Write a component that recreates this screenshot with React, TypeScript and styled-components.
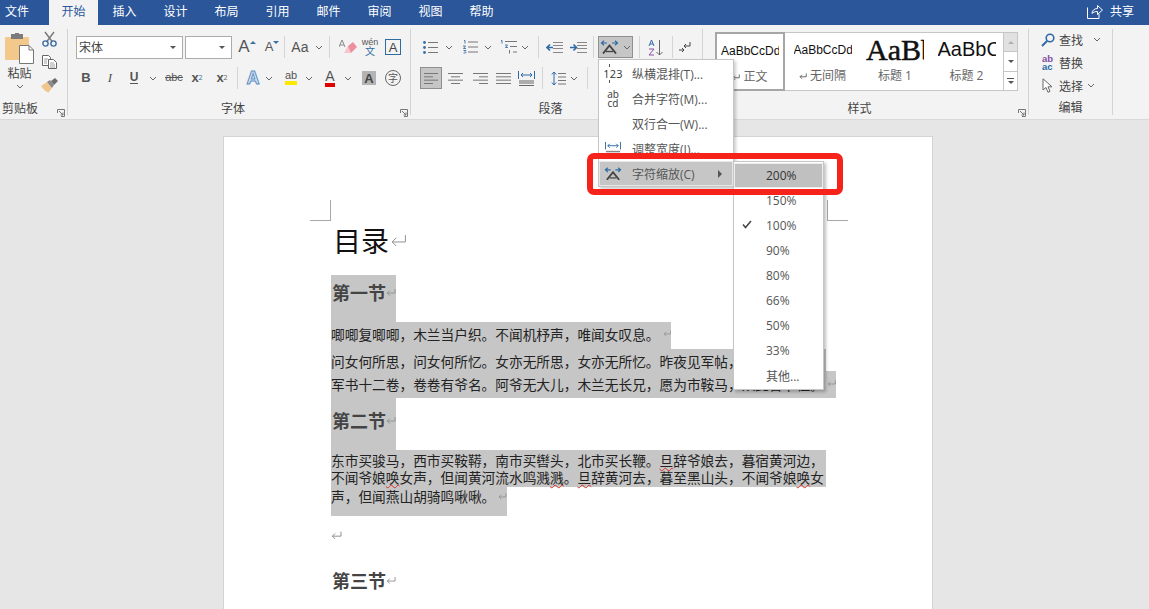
import React from "react";
import styled, { createGlobalStyle } from "styled-components";

const UI = `"Open Sans", "Noto Sans CJK SC", sans-serif`;
const CJK = `"Noto Sans CJK SC", sans-serif`;

const Global = createGlobalStyle`
  html, body { margin: 0; padding: 0; background: #e6e6e6; }
  #root { width: 1149px; height: 609px; overflow: hidden; }
  * { box-sizing: border-box; }
`;

const Shell = styled.div`
  position: relative; width: 1149px; height: 609px; overflow: hidden;
  font-family: ${UI}; font-size: 12px; color: #444;
  display: flex; flex-direction: column;
`;
const TabBar = styled.div`
  height: 25px; flex: none; background: #2b579a; display: flex; color: #fff;
  justify-content: space-between;
`;
const TabList = styled.div`display: flex;`;
const Tab = styled.div<{ $active?: boolean; $file?: boolean }>`
  width: ${p => (p.$file ? 34 : p.$active ? 49 : 51)}px;
  margin: ${p => (p.$file ? "0 15px 0 0" : p.$active ? "0 1px 0 0" : "0")};
  height: 25px; display: flex; align-items: center; justify-content: center;
  background: ${p => (p.$active ? "#f3f3f3" : "transparent")};
  color: ${p => (p.$active ? "#2b579a" : "#fff")};
  padding-bottom: 3px;
`;
const Share = styled.div`
  display: flex; align-items: center; gap: 7px; padding: 0 15px 3px 0; color: #fff;
`;

const Ribbon = styled.div`
  height: 95px; flex: none; background: #f3f3f3; border-bottom: 1px solid #d9d9d9;
  display: flex; padding-top: 4px;
`;
const Group = styled.div<{ $w: number }>`
  width: ${p => p.$w}px; height: 86px; border-right: 1px solid #d3d3d3; flex: none;
  display: flex; flex-direction: column;
`;
const Row = styled.div<{ $mt: number }>`
  height: 22px; margin-top: ${p => p.$mt}px; display: flex; align-items: center; flex: none;
`;
const Tool = styled.div<{ $w: number; $ml?: number; $on?: boolean }>`
  width: ${p => p.$w}px; height: 22px; margin-left: ${p => p.$ml ?? 0}px; flex: none;
  display: flex; align-items: center; justify-content: center; color: #555;
  background: ${p => (p.$on ? "#c6c6c6" : "transparent")};
  border: ${p => (p.$on ? "1px solid #8f8f8f" : "none")};
`;
const VSep = styled.div<{ $ml: number }>`
  width: 1px; height: 22px; background: #d5d5d5; margin-left: ${p => p.$ml}px; flex: none;
`;
const Glyph = styled.span<{ $s: number; $b?: boolean; $c?: string; $i?: boolean; $serif?: boolean }>`
  font-family: ${p => (p.$serif ? `"Liberation Serif", serif` : `"Liberation Sans", sans-serif`)};
  font-size: ${p => p.$s}px; font-weight: ${p => (p.$b ? 700 : 400)};
  font-style: ${p => (p.$i ? "italic" : "normal")};
  color: ${p => p.$c ?? "#555"}; line-height: 1; margin-top: -1px;
`;
const Under = styled.span<{ $color: string; $h: number }>`
  display: inline-flex; flex-direction: column; align-items: center;
  border-bottom: ${p => p.$h}px solid ${p => p.$color}; line-height: 1;
`;
const Sub = styled.sub`font-size: 7px; line-height: 0; color: #3a6ea5;`;
const Sup = styled.sup`font-size: 7px; line-height: 0; color: #666;`;
const Caret = styled.i<{ $down?: boolean }>`
  width: 0; height: 0; align-self: flex-start; margin-top: 5px;
  border-left: 3px solid transparent; border-right: 3px solid transparent;
  border-${p => (p.$down ? "top" : "bottom")}: 3px solid #3a6ea5;
`;
const Combo = styled.div<{ $w: number; $ml: number }>`
  width: ${p => p.$w}px; height: 23px; margin-left: ${p => p.$ml}px; background: #fff;
  border: 1px solid #ababab; display: flex; align-items: center; justify-content: space-between;
  padding: 0 6px 0 2px; color: #444; font-size: 12px; flex: none;
`;
const DownTri = styled.i`
  width: 0; height: 0; border-left: 3px solid transparent; border-right: 3px solid transparent;
  border-top: 3px solid #555;
`;
const LabelRow = styled.div<{ $mt: number }>`
  margin-top: ${p => p.$mt}px; height: 16px; display: flex; align-items: center; flex: none;
`;
const GroupLabel = styled.div<{ $pr?: number }>`
  flex: 1; text-align: center; padding-right: ${p => p.$pr ?? 0}px; color: #444; line-height: 16px;
`;
const Launcher = styled.div`
  width: 12px; height: 16px; display: flex; align-items: flex-end; justify-content: center;
`;
const ClipBody = styled.div`height: 72px; display: flex; flex: none;`;
const PasteCol = styled.div`
  width: 38px; padding: 4px 0 0 1px; display: flex; flex-direction: column; align-items: center; color: #444;
`;
const PasteText = styled.div`line-height: 16px; margin-top: 2px;`;
const ChevBox = styled.div`margin-top: 2px; line-height: 0;`;
const ClipTools = styled.div`
  width: 22px; margin-top: -2px; display: flex; flex-direction: column; align-items: center;
`;
const ClipTool = styled.div`height: 23.5px; flex: none; display: flex; align-items: center; justify-content: center;`;

const Gallery = styled.div`
  width: 303px; height: 59px; margin: 3px 0 0 12px; background: #fff;
  border: 1px solid #c6c6c6; border-left: none; display: flex; flex: none;
`;
const StyleItem = styled.div<{ $w: number; $sel?: boolean }>`
  width: ${p => p.$w}px; height: ${p => (p.$sel ? "59px" : "57px")}; flex: none;
  margin-top: ${p => (p.$sel ? "-1px" : "0")};
  border: ${p => (p.$sel ? "2px solid #a6a6a6" : "none")};
  display: flex; flex-direction: column; align-items: center; overflow: hidden;
  background: #fff;
`;
const Sample = styled.div<{ $size: number; $serif?: boolean; $heavy?: boolean; $w: number }>`
  width: ${p => p.$w}px; height: 33px; overflow: hidden; white-space: nowrap;
  display: flex; align-items: center; flex: none; color: #111;
  font-family: ${p => (p.$serif ? `"Liberation Serif", serif` : `"Liberation Sans", sans-serif`)};
  font-size: ${p => p.$size}px; -webkit-text-stroke: ${p => (p.$heavy ? ".5px #111" : "0")};
`;
const Caption = styled.div`
  display: flex; align-items: center; gap: 3px; color: #666; line-height: 16px; height: 20px;
`;
const ScrollCol = styled.div`
  width: 15px; height: 59px; margin-top: -1px; display: flex; flex-direction: column; flex: none;
  border: 1px solid #c6c6c6; background: #fff;
`;
const ScrollBtn = styled.div<{ $top?: boolean }>`
  flex: 1; display: flex; align-items: center; justify-content: center; flex-direction: column; gap: 2px;
  background: ${p => (p.$top ? "#e1e1e1" : "#fff")};
  & + & { border-top: 1px solid #c6c6c6; }
`;
const TinyBar = styled.i`width: 7px; height: 1px; background: #555;`;
const UpTri = styled.i`
  width: 0; height: 0; border-left: 3px solid transparent; border-right: 3px solid transparent;
  border-bottom: 3px solid #b0b0b0;
`;
const EditColumn = styled.div`margin-top: -1px; display: flex; flex-direction: column; flex: none;`;
const EditRow = styled.div`
  height: 23px; display: flex; align-items: center; gap: 4px; padding-left: 11px; color: #444; flex: none;
`;
const EditIcon = styled.div`width: 15px; display: flex; justify-content: center; flex: none;`;

const Canvas = styled.div`flex: 1; padding-top: 16px; overflow: hidden;`;
const Page = styled.div`
  position: relative; width: 710px; height: 520px; margin-left: 223px; background: #fff;
  border: 1px solid #d4d4d4; padding: 85px 0 0 107px; font-family: ${CJK}; color: #222;
`;
const Crop = styled.div<{ $right?: boolean }>`
  position: absolute; top: 63px; width: 21px; height: 21px;
  ${p => (p.$right ? "left: 603px; border-left: 1px solid #a8a8a8;" : "left: 86px; border-right: 1px solid #a8a8a8;")}
  border-bottom: 1px solid #a8a8a8;
`;
const Title = styled.div`
  height: 36px; margin: 0 0 17px 2px; font-size: 28px; font-weight: 400; color: #111;
  display: flex; align-items: center; gap: 1px; line-height: 36px; font-family: ${CJK};
`;
const Sel = styled.div<{ $w: number; $h: number; $pb?: number; $pt?: number; $plain?: boolean }>`
  width: ${p => p.$w}px; height: ${p => p.$h}px;
  padding-bottom: ${p => p.$pb ?? 0}px; padding-top: ${p => p.$pt ?? 0}px;
  background: ${p => (p.$plain ? "transparent" : "#c6c6c6")};
  display: flex; align-items: center; white-space: nowrap; font-size: 13.7px; line-height: 18px;
  color: #222;
`;
const Heading = styled.span`font-size: 18px; font-weight: 700; color: #444; margin-left: 1px;`;
const Squig = styled.span`text-decoration: underline wavy #d8342a 1px; text-underline-offset: 1px;`;

const Menu = styled.div`
  position: absolute; left: 598px; top: 59px; width: 136px; height: 128px; background: #fff;
  border: 1px solid #c6c6c6; padding: 1px 0; box-shadow: 2px 2px 3px rgba(0,0,0,.2); color: #555;
`;
const MenuItem = styled.div<{ $on?: boolean }>`
  height: 25px; display: flex; align-items: center; position: relative;
  background: ${p => (p.$on ? "#c6c6c6" : "transparent")};
  border: ${p => (p.$on ? "1px solid #e8e8e8" : "none")};
  padding-left: ${p => (p.$on ? "0" : "1px")};
`;
const MenuIcon = styled.div`
  width: 32px; height: 23px; padding-right: 6px; display: flex; align-items: center; justify-content: center; flex: none;
`;
const MenuText = styled.div`flex: 1; white-space: nowrap;`;
const MenuCaret = styled.i`
  width: 0; height: 0; margin-right: 10px; border-top: 4px solid transparent;
  border-bottom: 4px solid transparent; border-left: 4px solid #555;
`;
const SubMenu = styled.div`
  position: absolute; left: 733px; top: 161px; width: 91px; height: 229px; background: #fff;
  border: 1px solid #c6c6c6; padding: 1px 0; box-shadow: 2px 2px 3px rgba(0,0,0,.25); color: #555;
`;
const SubItem = styled.div<{ $on?: boolean }>`
  height: 25px; display: flex; align-items: center; padding-left: ${p => (p.$on ? 31 : 32)}px; position: relative;
  background: ${p => (p.$on ? "#c0c0c0" : "transparent")};
  border: ${p => (p.$on ? "1px solid #ededed" : "none")};
  color: ${p => (p.$on ? "#333" : "#555")};
`;
const Check = styled.span`position: absolute; left: 8px; top: 7px; line-height: 0;`;
const RedMark = styled.div`
  position: absolute; left: 587px; top: 153px; width: 256px; height: 42px;
  border: 6px solid #f5231a; border-radius: 7px; pointer-events: none;
`;

/* ---------- icons ---------- */
const Chev = () => (
  <svg width="8" height="5" viewBox="0 0 8 5"><path d="M1 1l3 3 3-3" fill="none" stroke="#666" strokeWidth="1" /></svg>
);
const Return = ({ w = 13, c = "#8c8c8c" }: { w?: number; c?: string }) => (
  <svg width={w} height={w * 0.75} viewBox="0 0 16 12">
    <path d="M14.500 1v6.500H2M6 3.500L2 7.500l4 4" fill="none" stroke={c} strokeWidth={(16 / w) * 0.95} />
  </svg>
);
const LaunchIcon = () => (
  <svg width="8" height="8" viewBox="0 0 8 8">
    <path d="M.5 4V.5H7.500V7.500H4M2 2l4 4M6 3.500V6H3.500" fill="none" stroke="#777" strokeWidth="1" />
  </svg>
);
const PasteIcon = () => (
  <svg width="30" height="31" viewBox="0 0 30 31">
    <rect x="0" y="4" width="24" height="23" rx="1" fill="#f2c98b" />
    <rect x="6" y="1" width="12" height="5" fill="#7c7c7c" />
    <rect x="10" y="0" width="4" height="2" fill="#7c7c7c" />
    <path d="M14.500 12.500H24l4.500 4.500V30.500H14.500z" fill="#fff" stroke="#777" />
    <path d="M24 12.500V17h4.500" fill="none" stroke="#777" />
  </svg>
);
const Scissors = () => (
  <svg width="15" height="16" viewBox="0 0 15 16">
    <path d="M3 1l7.500 10M12 1L4.500 11" stroke="#777" strokeWidth="1.400" fill="none" />
    <circle cx="3.500" cy="12.500" r="2.600" fill="none" stroke="#3a6ea5" strokeWidth="1.400" />
    <circle cx="11.500" cy="12.500" r="2.600" fill="none" stroke="#3a6ea5" strokeWidth="1.400" />
  </svg>
);
const CopyIcon = () => (
  <svg width="15" height="14" viewBox="0 0 15 14">
    <path d="M.5.5h6l2 2v8H.5z" fill="#fff" stroke="#666" />
    <path d="M6.500 4.500h5l3 3v6h-8z" fill="#fff" stroke="#666" />
    <path d="M2 4h4M2 6h3M2 8h3M8 8h4M8 10h5M8 12h5" stroke="#888" strokeWidth=".8" />
  </svg>
);
const BrushIcon = () => (
  <svg width="17" height="15" viewBox="0 0 17 15">
    <path d="M0 8l6-4 5 6-3 4c-2 1-5-2-8-6z" fill="#efc78c" />
    <path d="M6 4l3-2 4 5-2 3z" fill="#8a8a8a" />
    <path d="M10 3l4-3 3 3-4 4z" fill="#6d6d6d" />
  </svg>
);
const Eraser = () => (
  <svg width="18" height="17" viewBox="0 0 18 17">
    <path d="M9 7l5-4 4 5-6 6-3-1z" fill="#ee8fa0" />
    <path d="M5 14l4-7 3 7z" fill="#f5c5cd" />
    <path d="M0 8L3 1l3 7M1.200 6h3.600" fill="none" stroke="#888" strokeWidth="1" />
  </svg>
);
const WenStack = styled.span`
  display: flex; flex-direction: column; align-items: center; line-height: 8px; font-size: 9px; color: #555;
  font-family: "Liberation Sans", sans-serif;
  & b { font: 400 10px/10px ${CJK}; color: #2e6ba6; }
`;
const CircleChar = styled.span`
  width: 16px; height: 16px; border: 1px solid #666; border-radius: 50%;
  display: flex; align-items: center; justify-content: center; font: 400 10px/1 ${CJK}; color: #555;
`;
const ABox = styled.span`
  width: 16px; height: 16px; border: 1px solid #2f6c9f; display: flex; align-items: center; justify-content: center;
  font: 400 13px "Liberation Sans", sans-serif; color: #444;
`;
const AGrey = styled.span`
  width: 14px; height: 14px; background: #b4b4b4; display: flex; align-items: center; justify-content: center;
  font: 700 13px "Liberation Sans", sans-serif; color: #444;
`;
const AGlow = styled.span`
  font: 700 18px "Liberation Sans", sans-serif; color: #dbe9f6; line-height: 1;
  -webkit-text-stroke: 1px #5b8fc4;
`;
const Lines = ({ xs, w = 15 }: { xs: [number, number][]; w?: number }) => (
  <svg width={w} height="13" viewBox={`0 0 ${w} 13`}>
    {xs.map(([a, b], i) => (
      <path key={i} d={`M${a} ${1.5 + i * (10 / (xs.length - 1))}H${b}`} stroke="#777" />
    ))}
  </svg>
);
const Bullets = () => (
  <svg width="15" height="13" viewBox="0 0 15 13">
    {[1.5, 6.5, 11.5].map(y => (
      <g key={y}><circle cx="1.500" cy={y} r="1.400" fill="#3a6ea5" /><path d={`M5 ${y}H15`} stroke="#777" /></g>
    ))}
  </svg>
);
const Numbers = () => (
  <svg width="15" height="14" viewBox="0 0 15 14">
    <path d="M1 0.500h1v3M0 6h2.500L.5 8.500H3M.5 10.500H3l-1 1 1 1-.500.500H.5" fill="none" stroke="#3a6ea5" strokeWidth=".9" />
    {[2, 7, 12].map(y => <path key={y} d={`M5 ${y}H15`} stroke="#777" />)}
  </svg>
);
const MultiList = () => (
  <svg width="17" height="14" viewBox="0 0 17 14">
    <path d="M1 .5h1v3M5 5h2.500L5.500 7.500H8" fill="none" stroke="#3a6ea5" strokeWidth=".9" />
    <path d="M9.500 10v3.500" stroke="#777" />
    <path d="M5 1.500H17M10 6.500H17M13 12H17" stroke="#777" />
  </svg>
);
const Indent = ({ out }: { out?: boolean }) => (
  <svg width="17" height="13" viewBox="0 0 17 13">
    {[1.5, 4.500, 7.500, 11.500].map(y => <path key={y} d={`M7 ${y}H17`} stroke="#888" />)}
    <path d={out ? "M7 6.500H1M4 3.500L1 6.500l3 3" : "M0 6.500H6M3.500 3.500l3 3-3 3"} fill="none" stroke="#2e6ba6" strokeWidth="1.600" />
  </svg>
);
const ScaleIcon = ({ w = 19 }: { w?: number }) => (
  <svg width={w} height={w * 0.74} viewBox="0 0 19 14">
    <path d="M3 13.500L9.500 5.500 16 13.500" fill="none" stroke="#444" strokeWidth="1.900" />
    <path d="M6 11.500h7" stroke="#444" strokeWidth="1.300" />
    <path d="M7 3H1.500M4 .8L1.500 3 4 5.200M12 3h5.500M15 .8L17.500 3 15 5.200" fill="none" stroke="#2e6ba6" strokeWidth="1.200" />
  </svg>
);
const SortIcon = () => (
  <svg width="15" height="17" viewBox="0 0 15 17">
    <path d="M11.500 1v15M8.500 13l3 3 3-3" fill="none" stroke="#666" />
    <path d="M1 7L3.500 1 6 7M2 5h3" fill="none" stroke="#2e6ba6" />
    <path d="M1 10h5L1 16h5" fill="none" stroke="#8a4fa8" />
  </svg>
);
const PilIcon = () => (
  <svg width="14" height="13" viewBox="0 0 14 13">
    <path d="M12 1v4H6M8 3L6 5l2 2" fill="none" stroke="#444" />
    <path d="M1 9h5M4 7l2 2-2 2" fill="none" stroke="#444" />
  </svg>
);
const Distribute = ({ w = 17 }: { w?: number }) => (
  <svg width={w} height={w} viewBox="0 0 17 17">
    <path d="M.5 1v8M16.500 1v8M3 5h11M5 3L3 5l2 2M12 3l2 2-2 2" fill="none" stroke="#2e6ba6" />
    <path d="M1 11h15M1 13h15M1 15.500h15" stroke="#666" />
  </svg>
);
const LineSpacing = () => (
  <svg width="15" height="15" viewBox="0 0 15 15">
    <path d="M3 1v13M.8 3.500L3 1l2.200 2.500M.8 11.500L3 14l2.200-2.500" fill="none" stroke="#2e6ba6" />
    <path d="M7 2.500h8M7 6h8M7 9.500h8M7 13h8" stroke="#777" />
  </svg>
);
const Search = () => (
  <svg width="14" height="14" viewBox="0 0 14 14">
    <circle cx="9" cy="5" r="3.800" fill="none" stroke="#2e6ba6" strokeWidth="1.600" />
    <path d="M6 8l-5 5" stroke="#2e6ba6" strokeWidth="2" />
  </svg>
);
const Replace = styled.span`
  display: flex; flex-direction: column; font: 700 9.500px/8px "Liberation Sans", sans-serif; color: #7f4fa5;
  & b { color: #2e6ba6; font-weight: 700; }
`;
const Cursor = () => (
  <svg width="12" height="15" viewBox="0 0 12 15">
    <path d="M1 .8V12l3-2.500 2 4.800 2-1-2-4.500h4z" fill="#fff" stroke="#666" />
  </svg>
);
const ShareIcon = () => (
  <svg width="16" height="15" viewBox="0 0 16 15">
    <path d="M.5 3.500v11H12V10M5 9.500C5 6 8 4.500 10.500 4.500V1.500L15.500 6l-5 4.500V7.500C8.500 7.500 6 8 5 9.500z" fill="none" stroke="#fff" />
  </svg>
);
const VStack123 = styled.span`
  font: 400 11px "Open Sans", sans-serif; color: #333; position: relative; letter-spacing: .2px;
  &::before, &::after {
    content: ""; position: absolute; left: 6px; width: 1px; height: 3px; background: #555;
  }
  &::before { top: -2px; }
  &::after { bottom: -2px; }
`;
const AbCd = styled.span`
  font: 400 10px/9px "Open Sans", sans-serif; color: #333; text-align: center; display: block;
`;

const S = ({ w, ml, on, children }: { w: number; ml?: number; on?: boolean; children: React.ReactNode }) => (
  <Tool $w={w} $ml={ml} $on={on}>{children}</Tool>
);

const TABS = ["插入", "设计", "布局", "引用", "邮件", "审阅", "视图", "帮助"];
const SIZES = ["150%", "100%", "90%", "80%", "66%", "50%", "33%", "其他..."];

export default function App() {
  return (
    <Shell>
      <Global />
      <TabBar>
        <TabList>
          <Tab $file>文件</Tab>
          <Tab $active>开始</Tab>
          {TABS.map(t => <Tab key={t}>{t}</Tab>)}
        </TabList>
        <Share><ShareIcon />共享</Share>
      </TabBar>

      <Ribbon>
        <Group $w={68}>
          <ClipBody>
            <PasteCol>
              <PasteIcon />
              <PasteText>粘贴</PasteText>
              <ChevBox><Chev /></ChevBox>
            </PasteCol>
            <ClipTools>
              <ClipTool><Scissors /></ClipTool>
              <ClipTool><CopyIcon /></ClipTool>
              <ClipTool><BrushIcon /></ClipTool>
            </ClipTools>
          </ClipBody>
          <LabelRow $mt={0}>
            <GroupLabel $pr={15}>剪贴板</GroupLabel>
            <Launcher><LaunchIcon /></Launcher>
          </LabelRow>
        </Group>

        <Group $w={343}>
          <Row $mt={7}>
            <Combo $w={107} $ml={8}>宋体<DownTri /></Combo>
            <Combo $w={47} $ml={2}><span /><DownTri /></Combo>
            <S w={20} ml={5}><Glyph $s={17}>A</Glyph><Caret /></S>
            <S w={18} ml={6}><Glyph $s={13}>A</Glyph><Caret $down /></S>
            <VSep $ml={3} />
            <S w={44}><Glyph $s={14}>Aa</Glyph>&nbsp;&nbsp;<Chev /></S>
            <VSep $ml={0} />
            <S w={20} ml={8}><Eraser /></S>
            <S w={16} ml={4}><WenStack>wén<b>文</b></WenStack></S>
            <S w={18} ml={6}><ABox>A</ABox></S>
          </Row>
          <Row $mt={9}>
            <S w={16} ml={10}><Glyph $s={13} $b>B</Glyph></S>
            <S w={16} ml={8}><Glyph $s={13} $i $serif>I</Glyph></S>
            <S w={16} ml={8}><Under $color="#555" $h={1}><Glyph $s={12} $b>U</Glyph></Under></S>
            <S w={8} ml={7}><Chev /></S>
            <S w={20} ml={7}><Glyph $s={11}><s>abc</s></Glyph></S>
            <S w={16} ml={5}><Glyph $s={13} $b>x</Glyph><Sub>2</Sub></S>
            <S w={16} ml={9}><Glyph $s={13} $b>x</Glyph><Sup>2</Sup></S>
            <VSep $ml={7} />
            <S w={16} ml={7}><AGlow>A</AGlow></S>
            <S w={8} ml={4}><Chev /></S>
            <S w={18} ml={9}><Under $color="#ffe800" $h={4}><Glyph $s={11}>ab</Glyph></Under></S>
            <S w={8} ml={5}><Chev /></S>
            <S w={16} ml={9}><Under $color="#e00000" $h={4}><Glyph $s={14}>A</Glyph></Under></S>
            <S w={8} ml={6}><Chev /></S>
            <S w={14} ml={10}><AGrey>A</AGrey></S>
            <S w={16} ml={9}><CircleChar>字</CircleChar></S>
          </Row>
          <LabelRow $mt={12}>
            <GroupLabel>字体</GroupLabel>
            <Launcher><LaunchIcon /></Launcher>
          </LabelRow>
        </Group>

        <Group $w={292}>
          <Row $mt={7}>
            <S w={15} ml={12}><Bullets /></S>
            <S w={8} ml={7}><Chev /></S>
            <S w={15} ml={10}><Numbers /></S>
            <S w={8} ml={6}><Chev /></S>
            <S w={17} ml={8}><MultiList /></S>
            <S w={8} ml={4}><Chev /></S>
            <VSep $ml={9} />
            <S w={17} ml={7}><Indent out /></S>
            <S w={17} ml={7}><Indent /></S>
            <VSep $ml={6} />
            <S w={35} ml={4} on><ScaleIcon />&nbsp;<Chev /></S>
            <VSep $ml={6} />
            <S w={15} ml={8}><SortIcon /></S>
            <VSep $ml={9} />
            <S w={16} ml={4}><PilIcon /></S>
          </Row>
          <Row $mt={9}>
            <S w={22} ml={9} on><Lines xs={[[0, 14], [0, 9], [0, 14], [0, 9]]} /></S>
            <S w={16} ml={5}><Lines xs={[[0, 15], [3, 12], [0, 15], [3, 12]]} /></S>
            <S w={16} ml={9}><Lines xs={[[0, 15], [6, 15], [0, 15], [6, 15]]} /></S>
            <S w={15} ml={8}><Lines xs={[[0, 15], [0, 15], [0, 15], [0, 15]]} /></S>
            <S w={17} ml={7}><Distribute /></S>
            <VSep $ml={7} />
            <S w={15} ml={8}><LineSpacing /></S>
            <S w={8} ml={4}><Chev /></S>
            <VSep $ml={9} />
          </Row>
          <LabelRow $mt={12}>
            <GroupLabel>段落</GroupLabel>
            <Launcher />
          </LabelRow>
        </Group>

        <Group $w={326}>
          <Gallery>
            <StyleItem $w={70} $sel>
              <Sample $size={12} $w={58}>AaBbCcDd</Sample>
              <Caption><Return w={8} c="#666" />正文</Caption>
            </StyleItem>
            <StyleItem $w={75}>
              <Sample $size={12} $w={58}>AaBbCcDd</Sample>
              <Caption><Return w={8} c="#666" />无间隔</Caption>
            </StyleItem>
            <StyleItem $w={70}>
              <Sample $size={30} $serif $heavy $w={58}>AaBb</Sample>
              <Caption>标题 1</Caption>
            </StyleItem>
            <StyleItem $w={73}>
              <Sample $size={20} $w={58}>AaBbC</Sample>
              <Caption>标题 2</Caption>
            </StyleItem>
            <ScrollCol>
              <ScrollBtn $top><UpTri /></ScrollBtn>
              <ScrollBtn><DownTri /></ScrollBtn>
              <ScrollBtn><TinyBar /><DownTri /></ScrollBtn>
            </ScrollCol>
          </Gallery>
          <LabelRow $mt={10}>
            <GroupLabel>样式</GroupLabel>
            <Launcher><LaunchIcon /></Launcher>
          </LabelRow>
        </Group>

        <Group $w={84}>
          <EditColumn>
            <EditRow><EditIcon><Search /></EditIcon>查找&nbsp;&nbsp;<Chev /></EditRow>
            <EditRow><EditIcon><Replace>ab<b>ac</b></Replace></EditIcon>替换</EditRow>
            <EditRow><EditIcon><Cursor /></EditIcon>选择<Chev /></EditRow>
          </EditColumn>
          <LabelRow $mt={3}><GroupLabel>编辑</GroupLabel></LabelRow>
        </Group>
      </Ribbon>

      <Canvas>
        <Page>
          <Crop />
          <Crop $right />
          <Title>目录<Return w={17} /></Title>
          <Sel $w={65} $h={47} $pb={13}><Heading>第一节</Heading><Return w={11} /></Sel>
          <Sel $w={340} $h={27} $pb={4}>唧唧复唧唧，木兰当户织。不闻机杼声，唯闻女叹息。&nbsp;<Return w={11} /></Sel>
          <Sel $w={495} $h={22} $pt={2}>问女何所思，问女何所忆。女亦无所思，女亦无所忆。昨夜见军帖，可汗大点兵，</Sel>
          <Sel $w={505} $h={27} $pb={2}>军书十二卷，卷卷有爷名。阿爷无大儿，木兰无长兄，愿为市鞍马，从此替爷征。&nbsp;<Return w={11} /></Sel>
          <Sel $w={65} $h={52} $pb={8}><Heading>第二节</Heading><Return w={11} /></Sel>
          <Sel $w={495} $h={19} $pt={1}>东市买骏马，西市买鞍鞯，南市买辔头，北市买长鞭。<Squig>旦</Squig>辞爷娘去，暮宿黄河边，</Sel>
          <Sel $w={495} $h={18} $pb={2}>不闻爷娘<Squig>唤</Squig>女声，但闻黄河流水鸣溅<Squig>溅</Squig>。<Squig>旦</Squig>辞黄河去，暮至黑山头，不闻爷娘<Squig>唤</Squig>女</Sel>
          <Sel $w={176} $h={29} $pb={11}>声，但闻燕山胡骑鸣啾啾。&nbsp;<Return w={11} /></Sel>
          <Sel $plain $w={65} $h={38}><Return w={11} /></Sel>
          <Sel $plain $w={65} $h={56} $pb={4}><Heading>第三节</Heading><Return w={11} /></Sel>
        </Page>
      </Canvas>

      <Menu>
        <MenuItem><MenuIcon><VStack123>123</VStack123></MenuIcon><MenuText>纵横混排(T)...</MenuText></MenuItem>
        <MenuItem><MenuIcon><AbCd>ab<br />cd</AbCd></MenuIcon><MenuText>合并字符(M)...</MenuText></MenuItem>
        <MenuItem><MenuIcon /><MenuText>双行合一(W)...</MenuText></MenuItem>
        <MenuItem><MenuIcon><Distribute w={16} /></MenuIcon><MenuText>调整宽度(I)...</MenuText></MenuItem>
        <MenuItem $on><MenuIcon><ScaleIcon w={18} /></MenuIcon><MenuText>字符缩放(C)</MenuText><MenuCaret /></MenuItem>
      </Menu>
      <SubMenu>
        <SubItem $on>200%</SubItem>
        {SIZES.map(s => (
          <SubItem key={s}>
            {s === "100%" && (
              <Check><svg width="10" height="9" viewBox="0 0 10 9"><path d="M1 4.500L3.500 7.500 9 1" fill="none" stroke="#444" strokeWidth="1.500" /></svg></Check>
            )}
            {s}
          </SubItem>
        ))}
      </SubMenu>
      <RedMark />
    </Shell>
  );
}
